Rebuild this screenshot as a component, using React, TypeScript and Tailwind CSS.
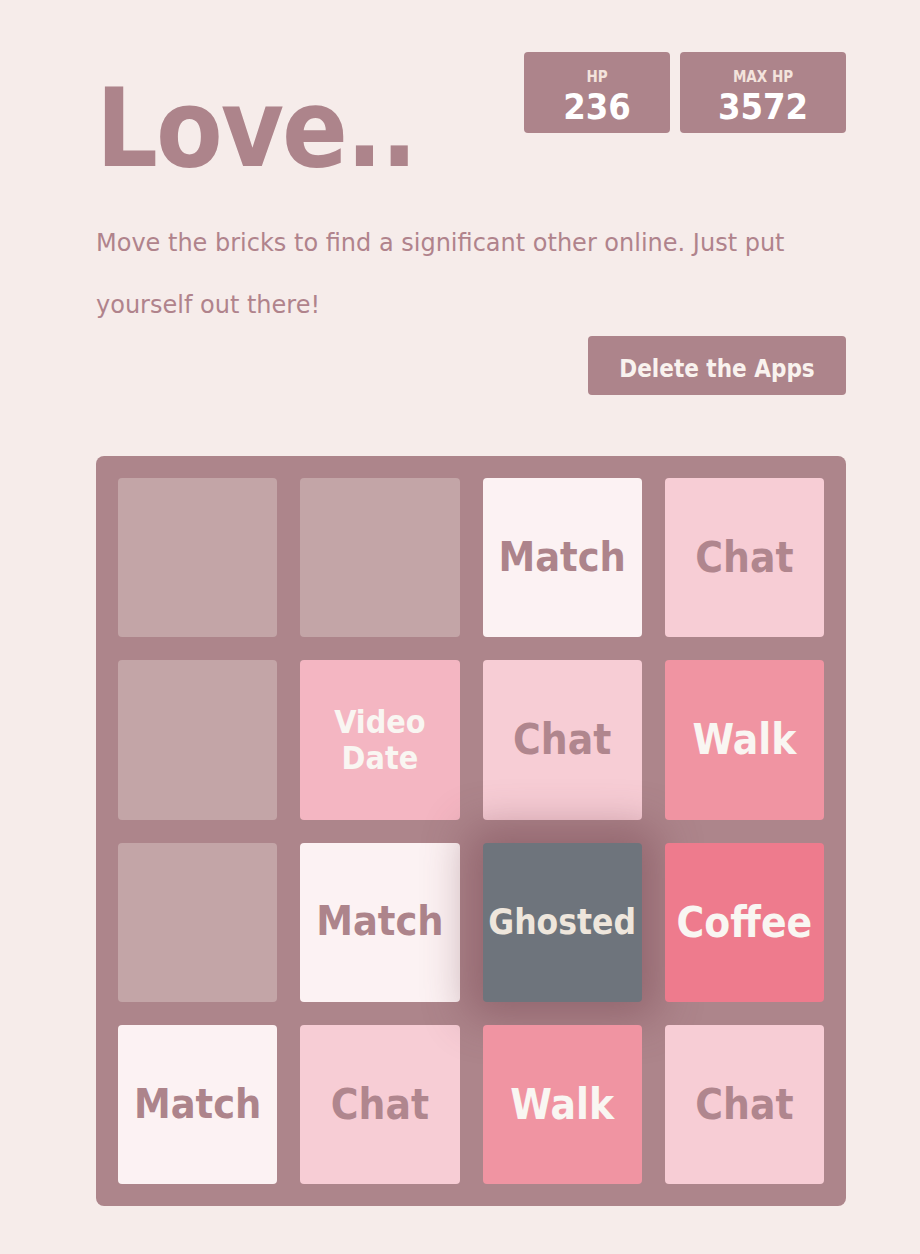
import React from "react";

type Tile = {
  label: string;
  bg: string;
  text: string;
  size: string;
  extra?: string;
};

const EMPTY: Tile = { label: "", bg: "bg-[#c3a5a7]", text: "", size: "" };

const match = (): Tile => ({
  label: "Match",
  bg: "bg-[#fcf2f3]",
  text: "text-[#ad848b]",
  size: "text-[41px]",
});
const chat = (top = false): Tile => ({
  label: "Chat",
  bg: "bg-[#f7cdd5]",
  text: "text-[#b0868e]",
  size: "text-[42px]",
  extra: top ? "z-20" : "",
});
const walk = (top = false): Tile => ({
  label: "Walk",
  bg: "bg-[#f094a2]",
  text: "text-[#f9f6f2]",
  size: "text-[42px]",
  extra: top ? "z-20" : "",
});

const tiles: Tile[] = [
  EMPTY,
  EMPTY,
  match(),
  chat(),
  EMPTY,
  {
    label: "Video Date",
    bg: "bg-[#f4b6c2]",
    text: "text-[#f9f6f2]",
    size: "text-[32px] leading-[36px] px-6",
  },
  chat(),
  walk(true),
  EMPTY,
  match(),
  {
    label: "Ghosted",
    bg: "bg-[#6e747c]",
    text: "text-[#eee6dc]",
    size: "text-[35px]",
    extra: "z-10 shadow-[0_0_44px_16px_rgba(110,60,72,0.42)]",
  },
  {
    label: "Coffee",
    bg: "bg-[#ee7b8d]",
    text: "text-[#f9f6f2]",
    size: "text-[42px]",
    extra: "z-20",
  },
  match(),
  chat(),
  walk(true),
  chat(true),
];

export default function App() {
  return (
    <main
      className="min-h-screen bg-[#f6ecea]"
      style={{ fontFamily: '"DejaVu Sans Condensed", "DejaVu Sans", sans-serif' }}
    >
      <div className="w-[750px] ml-[96px] pt-[52px] pb-12">
        {/* Header */}
        <header className="flex items-start justify-between">
          <h1 className="mt-[23px] text-[108px] leading-none font-bold text-[#ad848b] tracking-[-2px]">
            Love..
          </h1>
          <div className="flex gap-[10px]">
            <div className="w-[146px] h-[81px] rounded bg-[#ad848b] flex flex-col items-center pt-[17px]">
              <span className="text-[15px] leading-[16px] font-bold text-[#f3e3dc]">HP</span>
              <span className="mt-[3px] text-[36px] leading-[38px] font-bold text-white">236</span>
            </div>
            <div className="w-[166px] h-[81px] rounded bg-[#ad848b] flex flex-col items-center pt-[17px]">
              <span className="text-[15px] leading-[16px] font-bold text-[#f3e3dc]">MAX HP</span>
              <span className="mt-[3px] text-[36px] leading-[38px] font-bold text-white">3572</span>
            </div>
          </div>
        </header>

        {/* Intro */}
        <p
          className="mt-[29px] text-[24px] leading-[62px] text-[#b0838c] max-w-[720px]"
          style={{ fontFamily: '"DejaVu Sans", sans-serif' }}
        >
          Move the bricks to find a significant other online. Just put yourself out there!
        </p>

        <div className="flex justify-end">
          <button className="w-[258px] h-[59px] pt-[7px] rounded bg-[#ad848b] text-[24px] font-bold text-[#f9f2ee]">
            Delete the Apps
          </button>
        </div>

        {/* Board */}
        <section className="mt-[61px] w-[750px] h-[750px] rounded-lg bg-[#ad858b] p-[22px] grid grid-cols-4 grid-rows-4 gap-[23px]">
          {tiles.map((t, i) => (
            <div
              key={i}
              className={`relative rounded ${t.bg} ${t.extra ?? ""} flex items-center justify-center text-center`}
            >
              {t.label ? (
                <span className={`font-bold ${t.text} ${t.size}`}>{t.label}</span>
              ) : null}
            </div>
          ))}
        </section>
      </div>
    </main>
  );
}
